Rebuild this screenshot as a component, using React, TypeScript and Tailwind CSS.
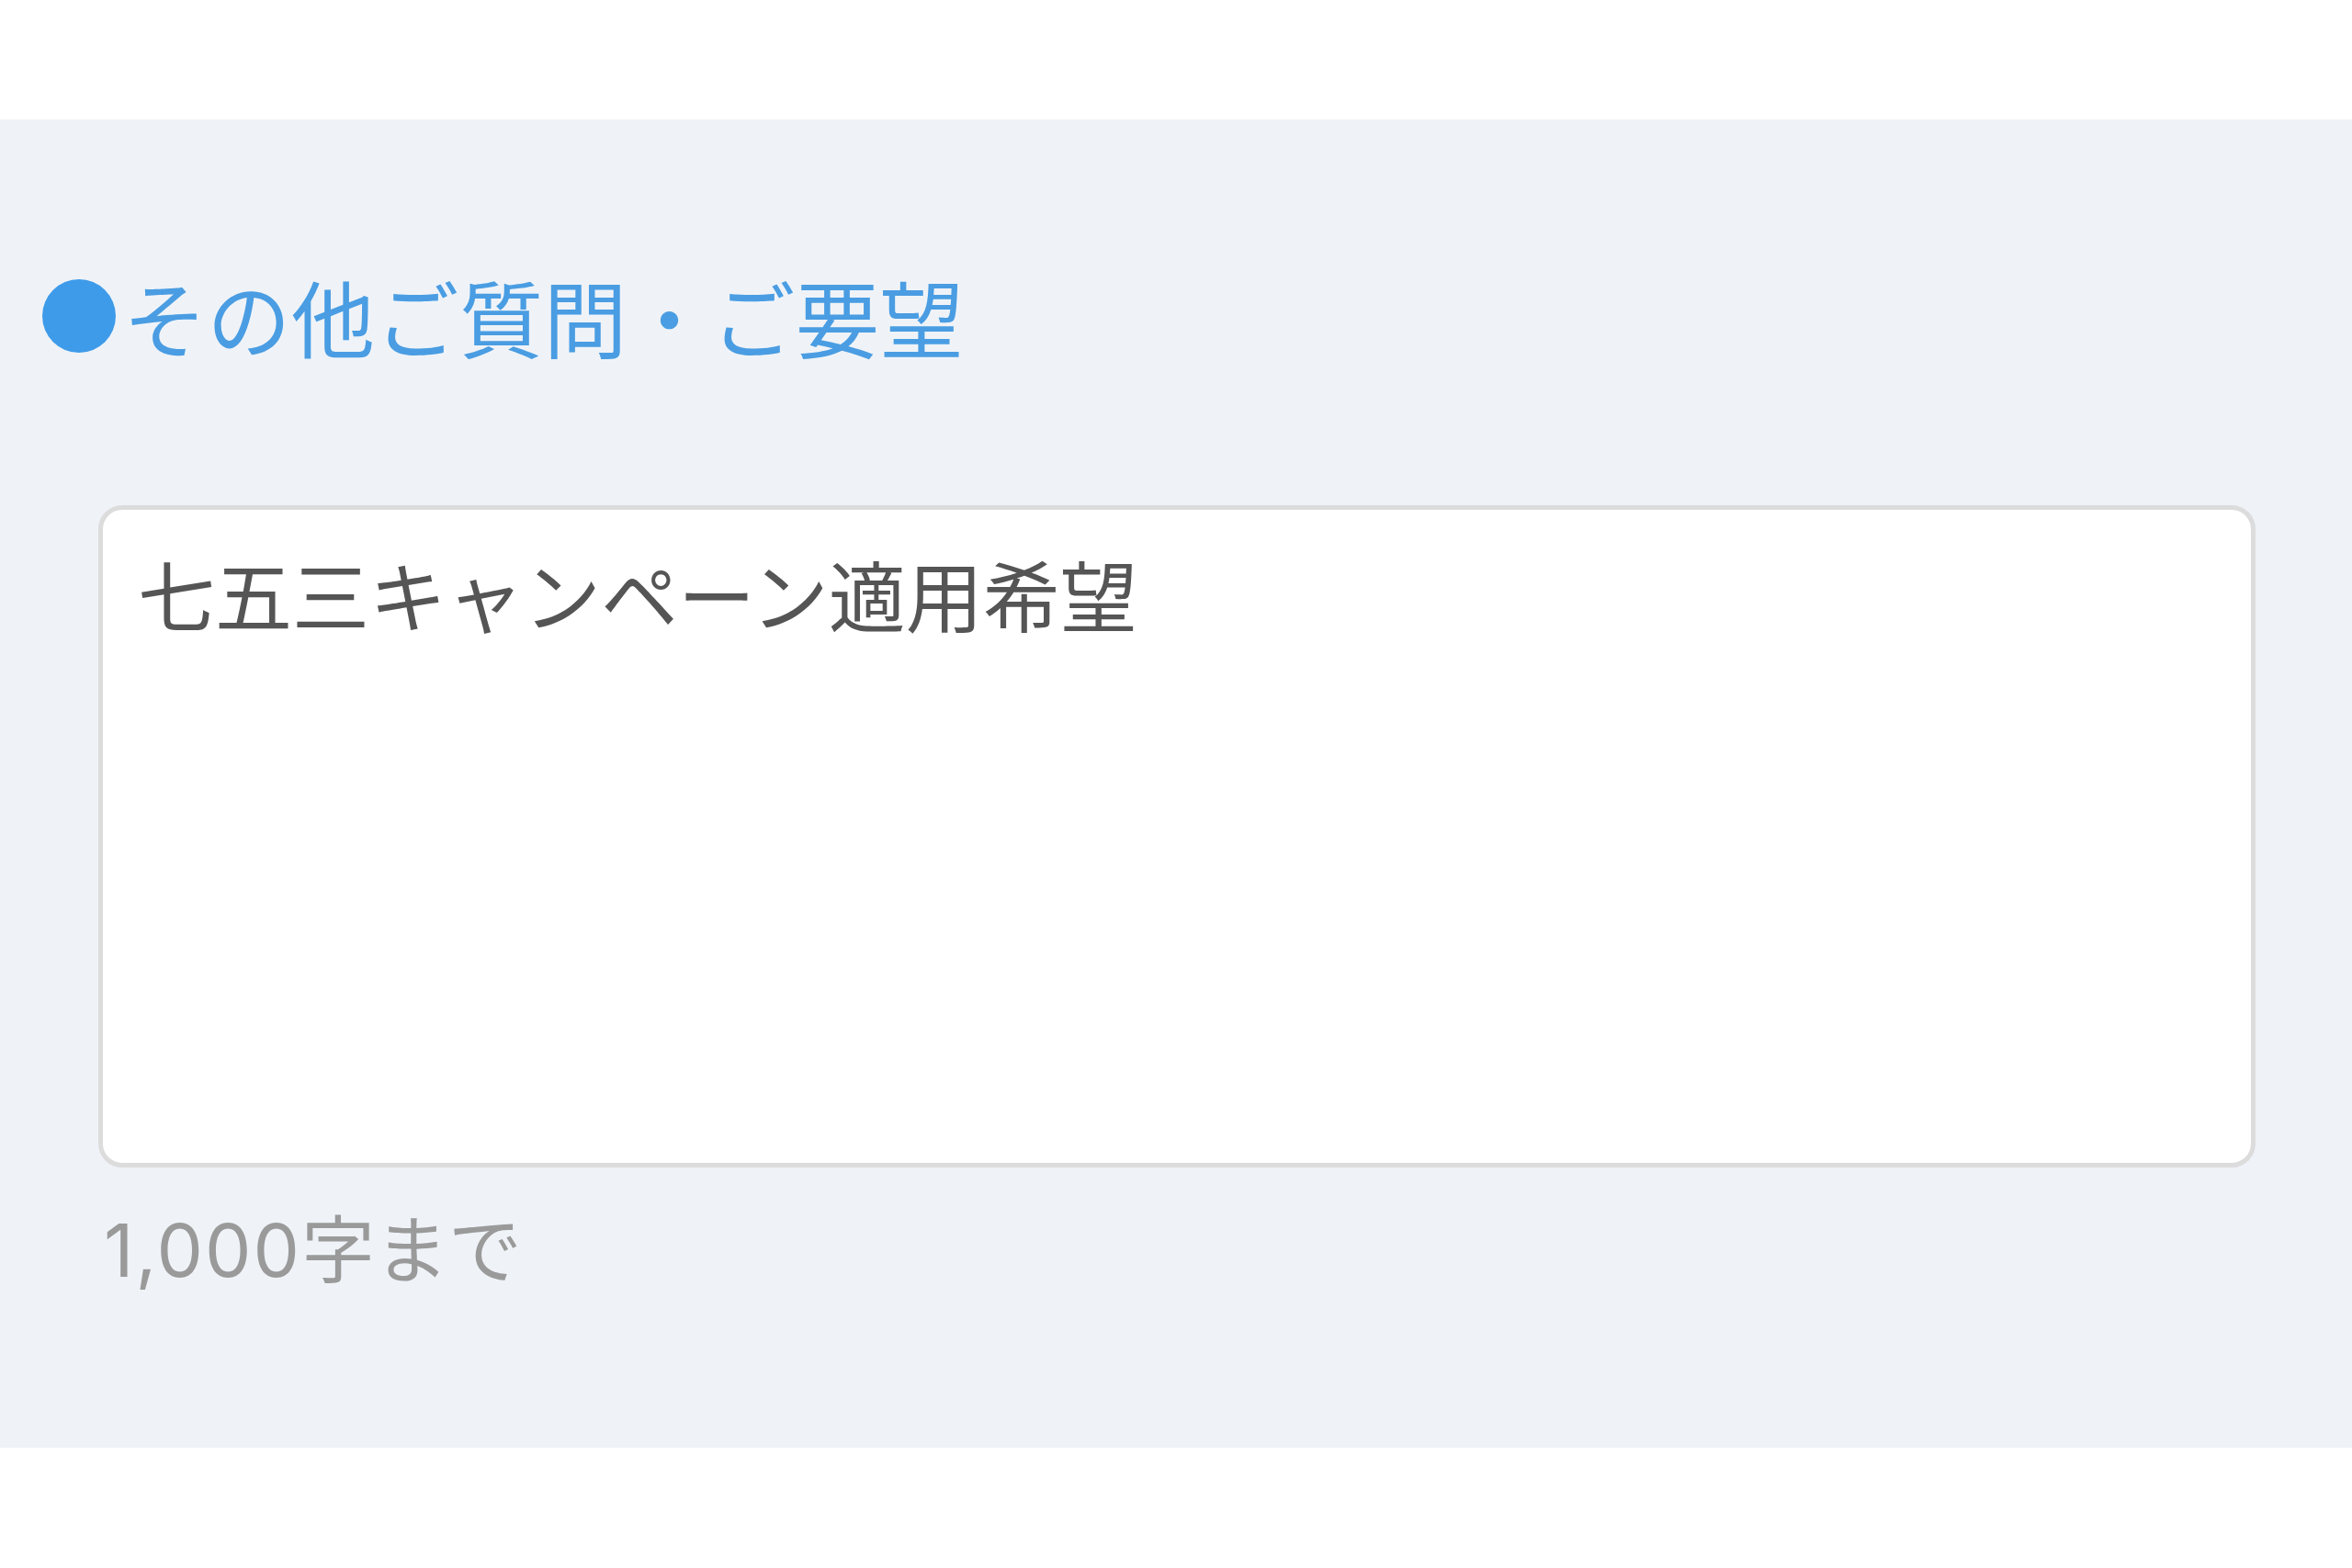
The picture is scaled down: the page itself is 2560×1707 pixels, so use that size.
import React from "react";

export default function App() {
  const font = { fontFamily: '"Noto Sans CJK JP", "Noto Sans", sans-serif' };
  const counterFont = { fontFamily: 'Inter, "Noto Sans CJK JP", sans-serif' };
  return (
    <div className="w-[2560px] h-[1707px] bg-white" style={font}>
      <div className="h-[130px] bg-white" />
      <section className="h-[1446px] bg-[#eff3f8] pt-[168px]">
        <div className="flex items-center h-[91px] pl-[46px]">
          <div className="w-[80px] h-[80px] rounded-full bg-[#3e9be9] shrink-0" />
          <h2 className="ml-[8px] text-[91px] leading-none font-normal text-[#4a9de2] tracking-[0.5px]">
            その他ご質問・ご要望
          </h2>
        </div>
        <div className="mt-[161px] pl-[107px] pr-[105px]">
          <textarea
            readOnly
            defaultValue="七五三キャンペーン適用希望"
            className="block w-full h-[721px] resize-none bg-white border-[5px] border-[#dcdcdc] rounded-[26px] pt-[49px] pl-[38px] pr-[42px] text-[84px] leading-none text-[#555555] outline-none"
            style={font}
          />
          <p className="mt-[50px] pl-[6px] text-[80px] leading-none text-[#9a9a9a]" style={counterFont}>
            <span className="tracking-[2px]">1,000</span>字まで
          </p>
        </div>
      </section>
    </div>
  );
}
